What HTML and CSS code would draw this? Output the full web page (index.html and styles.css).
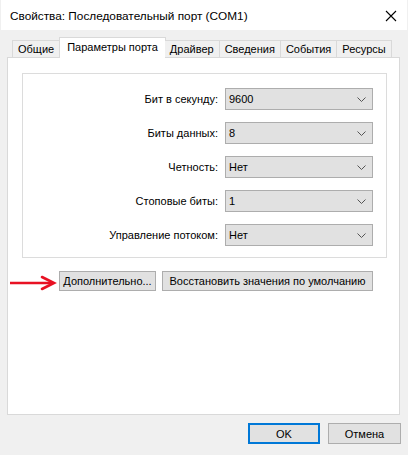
FILE: index.html
```html
<!DOCTYPE html>
<html lang="ru">
<head>
<meta charset="utf-8">
<title>Свойства: Последовательный порт (COM1)</title>
<link rel="stylesheet" href="styles.css">
</head>
<body>
<div class="window">
  <div class="titlebar">
    <span class="title">Свойства: Последовательный порт (COM1)</span>
    <svg class="close" width="12" height="12" viewBox="0 0 12 12"><path d="M1 1L11 11M11 1L1 11" stroke="#000" stroke-width="1.1" fill="none"/></svg>
  </div>
  <div class="body">
    <div class="tabs">
      <div class="tab">Общие</div>
      <div class="tab active">Параметры порта</div>
      <div class="tab">Драйвер</div>
      <div class="tab">Сведения</div>
      <div class="tab">События</div>
      <div class="tab">Ресурсы</div>
    </div>
    <div class="panel">
      <div class="group">
        <div class="row"><span class="label">Бит в секунду:</span><div class="combo"><span>9600</span><svg class="chev" width="9" height="5" viewBox="0 0 9 5"><path d="M0.5 0.5L4.5 4.5L8.5 0.5" stroke="#555" fill="none"/></svg></div></div>
        <div class="row"><span class="label">Биты данных:</span><div class="combo"><span>8</span><svg class="chev" width="9" height="5" viewBox="0 0 9 5"><path d="M0.5 0.5L4.5 4.5L8.5 0.5" stroke="#555" fill="none"/></svg></div></div>
        <div class="row"><span class="label">Четность:</span><div class="combo"><span>Нет</span><svg class="chev" width="9" height="5" viewBox="0 0 9 5"><path d="M0.5 0.5L4.5 4.5L8.5 0.5" stroke="#555" fill="none"/></svg></div></div>
        <div class="row"><span class="label">Стоповые биты:</span><div class="combo"><span>1</span><svg class="chev" width="9" height="5" viewBox="0 0 9 5"><path d="M0.5 0.5L4.5 4.5L8.5 0.5" stroke="#555" fill="none"/></svg></div></div>
        <div class="row"><span class="label">Управление потоком:</span><div class="combo"><span>Нет</span><svg class="chev" width="9" height="5" viewBox="0 0 9 5"><path d="M0.5 0.5L4.5 4.5L8.5 0.5" stroke="#555" fill="none"/></svg></div></div>
      </div>
      <div class="actions">
        <button class="btn btn-adv">Дополнительно...</button>
        <button class="btn btn-reset">Восстановить значения по умолчанию</button>
      </div>
    </div>
    <div class="footer">
      <button class="btn btn-ok">OK</button>
      <button class="btn btn-cancel">Отмена</button>
    </div>
  </div>
  <svg class="arrow" width="50" height="16" viewBox="0 0 50 16"><path d="M0 8H42" stroke="#e81123" stroke-width="2.4"/><path d="M32 2L44 8L32 14" stroke="#e81123" stroke-width="2.6" fill="none" stroke-linejoin="miter" stroke-linecap="round"/></svg>
</div>
</body>
</html>
```
FILE: styles.css
```css
html, body {
  margin: 0;
  padding: 0;
  background: #f0f0f0;
}
body {
  width: 408px;
  height: 455px;
  overflow: hidden;
  font-family: "Liberation Sans", Arial, sans-serif;
  font-size: 11px;
  color: #000;
}
.window {
  position: relative;
  margin-left: 1px;
  width: 406px;
  height: 455px;
  background: #f0f0f0;
}
.titlebar {
  height: 30px;
  background: #fff;
  display: flex;
  align-items: center;
  justify-content: space-between;
  padding: 1px 10px 0 9px;
  box-sizing: border-box;
}
.title {
  font-family: "Liberation Sans", Arial, sans-serif;
  font-size: 11.8px;
}
.body {
  padding: 8px 6px 0 6px;
}
.tabs {
  display: flex;
  align-items: flex-end;
  margin-left: 5px;
  height: 19px;
  position: relative;
  z-index: 1;
}
.tab {
  height: 16px;
  line-height: 17px;
  padding: 0 5px;
  border: 1px solid #d9d9d9;
  border-bottom: none;
  border-right: none;
  background: #f0f0f0;
  box-sizing: content-box;
  white-space: nowrap;
}
.tab:last-child {
  border-right: 1px solid #d9d9d9;
}
.tab.active {
  height: 20px;
  line-height: 18px;
  background: #fff;
  border-right: 1px solid #d9d9d9;
  margin-right: -1px;
  margin-bottom: -1px;
  padding: 0 7px;
}
.tab.active + .tab {
  border-left: none;
}
.panel {
  background: #fff;
  border: 1px solid #d9d9d9;
  height: 358px;
  padding: 15px 12px 0 14px;
  box-sizing: border-box;
  width: 393px;
}
.group {
  border: 1px solid #dcdcdc;
  padding: 14px 13px 11px 0;
  display: flex;
  flex-direction: column;
  gap: 12px;
}
.row {
  display: flex;
  justify-content: flex-end;
  align-items: center;
  gap: 7px;
}
.label {
  font-size: 11px;
  white-space: nowrap;
}
.combo {
  width: 137px;
  height: 20px;
  border: 1px solid #adadad;
  background: #e1e1e1;
  display: flex;
  align-items: center;
  justify-content: space-between;
  padding: 0 6px 0 3px;
  box-sizing: content-box;
  font-size: 11px;
}
.btn {
  font-family: "Liberation Sans", Arial, sans-serif;
  font-size: 11px;
  background: #e1e1e1;
  border: 1px solid #adadad;
  color: #000;
  padding: 0;
  margin: 0;
  height: 20px;
  white-space: nowrap;
}
.actions {
  display: flex;
  gap: 6px;
  margin-top: 13px;
  padding-left: 37px;
}
.btn-adv {
  width: 97px;
}
.btn-reset {
  width: 211px;
}
.footer {
  display: flex;
  justify-content: flex-end;
  gap: 8px;
  margin-top: 8px;
}
.btn-ok {
  width: 72px;
  height: 21px;
  border: 2px solid #0078d7;
}
.btn-cancel {
  width: 73px;
  height: 21px;
}
.arrow {
  position: absolute;
  left: 9px;
  top: 275px;
}
```
